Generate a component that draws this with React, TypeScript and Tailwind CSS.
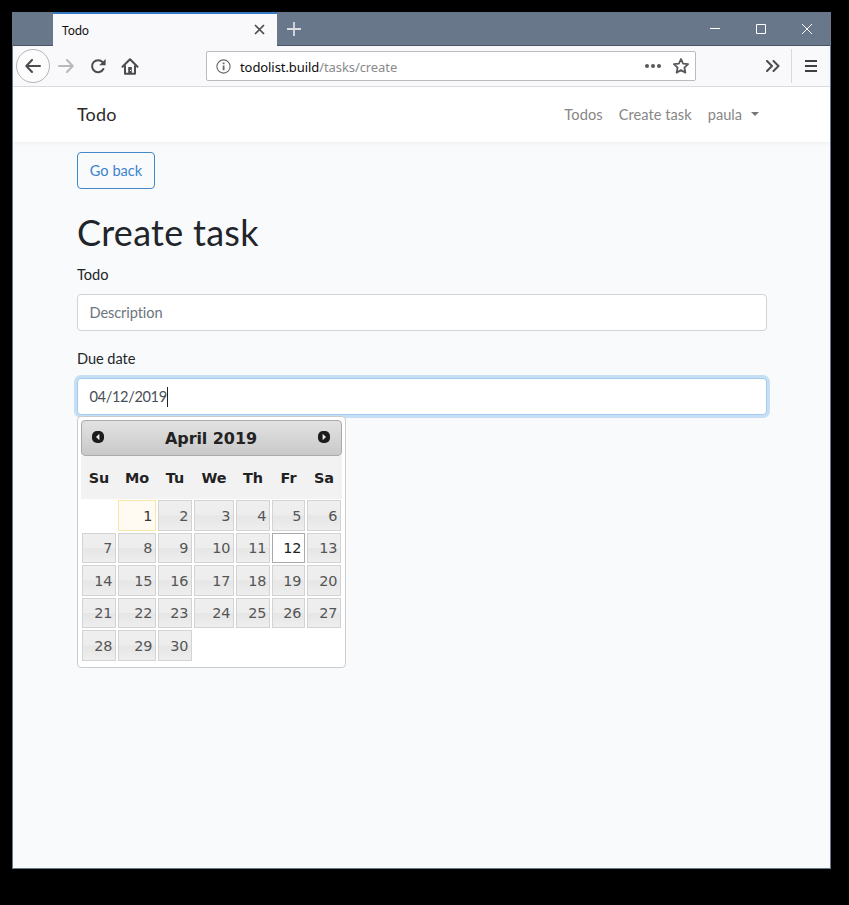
import React from "react";

const weekdays = ["Su", "Mo", "Tu", "We", "Th", "Fr", "Sa"];
const days = Array.from({ length: 30 }, (_, i) => i + 1);
const columns = "grid grid-cols-[34px_38px_34px_40px_34px_33px_34px] gap-x-[2px]";

function dayStyle(day: number) {
  if (day === 1) return "border-[#f8e8a8] bg-[#fffbf3] text-[#363636]";
  if (day === 12) return "border-[#aaaaaa] bg-white text-[#212121]";
  return "border-[#d3d3d3] bg-[linear-gradient(#efefef_0%,#ededed_49%,#e6e6e6_51%,#eeeeee_100%)] text-[#555555]";
}

function CircleArrow({ flip = false }: { flip?: boolean }) {
  return (
    <svg width="12" height="12" viewBox="0 0 12 12" className={flip ? "-mt-[2px] -scale-x-100" : "-mt-[2px]"}>
      <rect width="12" height="12" rx="5" fill="#1c1c1c" />
      <path d="M7.4 2.8v6.4L4 6z" fill="#eee" />
    </svg>
  );
}

function TitleBar() {
  return (
    <div className="flex h-[34px] border-b border-[#4a5568] bg-[#687789]">
      <div className="w-10" />
      <div className="-mb-px flex h-[34px] w-[224px] items-center justify-between border-t-2 border-[#3577c2] bg-[#f9f9fb] pr-[12px] pl-[9px]">
        <span className="pt-px font-['Noto_Sans',sans-serif] text-[12px] tracking-[-0.2px] text-[#0c0c0d]">Todo</span>
        <svg className="-mt-px" width="11" height="11" viewBox="0 0 11 11" stroke="#4a4a4f" strokeWidth="1.7">
          <path d="M1 1l9 9M10 1l-9 9" />
        </svg>
      </div>
      <svg className="mt-[10px] ml-[10px]" width="14" height="14" viewBox="0 0 14 14" stroke="#d8dce2" strokeWidth="1.8">
        <path d="M7 0v14M0 7h14" />
      </svg>
      <div className="mr-[18px] ml-auto flex items-start gap-[36px] pt-[12px]">
        <svg width="10" height="10" viewBox="0 0 10 10" stroke="#fff"><path d="M0 4.5h10" /></svg>
        <svg width="10" height="10" viewBox="0 0 10 10" fill="none" stroke="#fff"><path d="M.5.5h9v9h-9z" /></svg>
        <svg width="10" height="10" viewBox="0 0 10 10" stroke="#fff"><path d="M0 0l10 10M10 0L0 10" /></svg>
      </div>
    </div>
  );
}

function Toolbar() {
  return (
    <div className="flex h-[41px] items-center border-b border-[#dcdcde] bg-[#f9f9fb] pl-[3px]">
      <div className="flex size-[34px] shrink-0 items-center justify-center rounded-full border border-[#b5b5b7] bg-[#fcfcfd]">
        <svg width="16" height="14" viewBox="0 0 16 14" fill="none" stroke="#4c4c50" strokeWidth="2" strokeLinecap="round" strokeLinejoin="round">
          <path d="M15 7H1.5M7 1L1.3 7 7 13" />
        </svg>
      </div>
      <svg className="ml-2" width="16" height="14" viewBox="0 0 16 14" fill="none" stroke="#b9b9bb" strokeWidth="2" strokeLinecap="round" strokeLinejoin="round">
        <path d="M1 7h13.5M9 1l5.7 6L9 13" />
      </svg>
      <svg className="ml-[16px]" width="16" height="16" viewBox="0 0 16 16">
        <path d="M13.4 11A6 6 0 1 1 12.6 4.2" fill="none" stroke="#4c4c50" strokeWidth="2" strokeLinecap="round" />
        <path d="M15.6 1v6.3H9.2z" fill="#4c4c50" />
      </svg>
      <svg className="ml-[15px]" width="18" height="17" viewBox="0 0 18 17">
        <path d="M1.5 8.8L9 1.3l7.5 7.5M4 8v7.8h10V8" fill="none" stroke="#4c4c50" strokeWidth="2" strokeLinecap="round" strokeLinejoin="round" />
        <path d="M7.2 9h3.6v7H7.2z" fill="#4c4c50" />
        <path d="M9 12h1v1H9z" fill="#fff" />
      </svg>
      <div className="ml-[67px] flex h-[30px] w-[490px] items-center rounded-[2px] border border-[#bcbcbe] bg-white pr-[6px] pl-[9px]">
        <svg width="15" height="15" viewBox="0 0 15 15">
          <circle cx="7.5" cy="7.5" r="6.6" fill="none" stroke="#66666a" strokeWidth="1.1" />
          <path d="M6.7 3.5h1.8v1.8H6.7zM6.7 6.5h1.8v4.8H6.7z" fill="#66666a" />
        </svg>
        <span className="mt-[3px] ml-[9px] font-['Noto_Sans',sans-serif] text-[13px] tracking-[-0.08px] text-[#8a8a8c]">
          <span className="text-[#0c0c0d]">todolist.build</span>/tasks/create
        </span>
        <svg className="ml-auto" width="16" height="4" viewBox="0 0 16 4" fill="#58585c">
          <circle cx="2" cy="2" r="2" /><circle cx="8" cy="2" r="2" /><circle cx="14" cy="2" r="2" />
        </svg>
        <svg className="ml-[12px]" width="16" height="16" viewBox="0 0 16 16" fill="none" stroke="#58585c" strokeWidth="1.8" strokeLinejoin="round">
          <path d="M8 1l2.1 4.6 5 .6-3.7 3.4 1 5L8 12.1l-4.4 2.5 1-5L.9 6.2l5-.6z" />
        </svg>
      </div>
      <svg className="ml-[70px]" width="14" height="12" viewBox="0 0 14 12" fill="none" stroke="#4c4c50" strokeWidth="2" strokeLinecap="round" strokeLinejoin="round">
        <path d="M1 1l5 5-5 5M7.5 1l5 5-5 5" />
      </svg>
      <div className="ml-[11px] h-[34px] w-px bg-[#d9d9db]" />
      <svg className="ml-[13px]" width="12" height="12" viewBox="0 0 12 12" stroke="#3e3e43" strokeWidth="2">
        <path d="M0 1h12M0 6h12M0 11h12" />
      </svg>
    </div>
  );
}

function DatePicker() {
  return (
    <div className="absolute top-[38px] left-0 h-[252px] w-[269px] rounded-[4px] border border-[#cccccc] bg-white p-[3px] font-['DejaVu_Sans',Verdana,sans-serif]">
      <div className="flex h-[36px] items-center justify-between rounded-[4px] border border-[#aaaaaa] bg-[linear-gradient(#e2e2e2,#c9c9c9)] pr-[11px] pb-px pl-[10px] text-[#222222]">
        <CircleArrow />
        <span className="pt-[2px] text-[16px] font-bold tracking-[-0.07px]">April 2019</span>
        <CircleArrow flip />
      </div>
      <div className={`${columns} h-[43px] items-center bg-[#f2f2f2] pt-[2px] pl-px text-center text-[14.4px] font-bold text-[#222222]`}>
        {weekdays.map((name) => <span key={name}>{name}</span>)}
      </div>
      <div className={`${columns} auto-rows-[30.5px] gap-y-[2px] pt-[1.2px] pl-px`}>
        <span />
        {days.map((day) => (
          <div key={day} className={`flex items-center justify-end border pt-px pr-[2.5px] text-[14.4px] leading-none ${dayStyle(day)}`}>
            {day}
          </div>
        ))}
      </div>
    </div>
  );
}

export default function App() {
  return (
    <div className="h-[905px] w-[849px] overflow-hidden bg-black p-3">
      <div className="flex h-[857px] w-[819px] flex-col border border-t-0 border-[#687789] bg-[#f8fafc]">
        <TitleBar />
        <Toolbar />
        <main className="flex-1 font-[Lato,'Open_Sans',sans-serif] text-[14.6px] text-[#212529] [font-variant-ligatures:none]">
          <nav className="flex h-[55px] items-center bg-white pr-[71px] pl-16 text-[#868686] shadow-[0_2px_4px_rgba(0,0,0,0.04)]">
            <span className="mr-auto text-[18px] tracking-[0.15px] text-[#2b2b2b]">Todo</span>
            <span className="tracking-[0.1px]">Todos</span>
            <span className="ml-4 tracking-[0.05px]">Create task</span>
            <span className="ml-4 flex items-center">
              paula
              <svg className="ml-[9px]" width="8" height="4" viewBox="0 0 8 4" fill="#777"><path d="M0 0h8L4 4z" /></svg>
            </span>
          </nav>
          <div className="pr-[63px] pl-16">
            <button className="mt-[10px] block h-[37px] w-[78px] rounded-[4px] border border-[#4189c9] text-[#3e83cc]">Go back</button>
            <h1 className="mt-[21px] h-[45px] text-[36px] leading-[44px] tracking-[0.28px]">Create task</h1>
            <label className="mt-[9px] block h-[22px] leading-[22px]">Todo</label>
            <div className="mt-[8px] flex h-[37px] items-center rounded-[4px] border border-[#ced4da] bg-white px-[11.5px] tracking-[-0.1px] text-[#6c757d]">Description</div>
            <label className="mt-[17px] block h-[22px] leading-[22px] tracking-[-0.05px]">Due date</label>
            <div className="relative mt-[8px]">
              <div className="flex h-[37px] items-center rounded-[4px] border border-[#a1cbef] bg-white px-[11.5px] text-[#495057] shadow-[0_0_0_3px_rgba(52,144,220,0.25)]">
                <span className="tracking-[-0.36px]">04/12/2019</span>
                <span className="h-5 w-px bg-[#222]" />
              </div>
              <DatePicker />
            </div>
          </div>
        </main>
      </div>
    </div>
  );
}
